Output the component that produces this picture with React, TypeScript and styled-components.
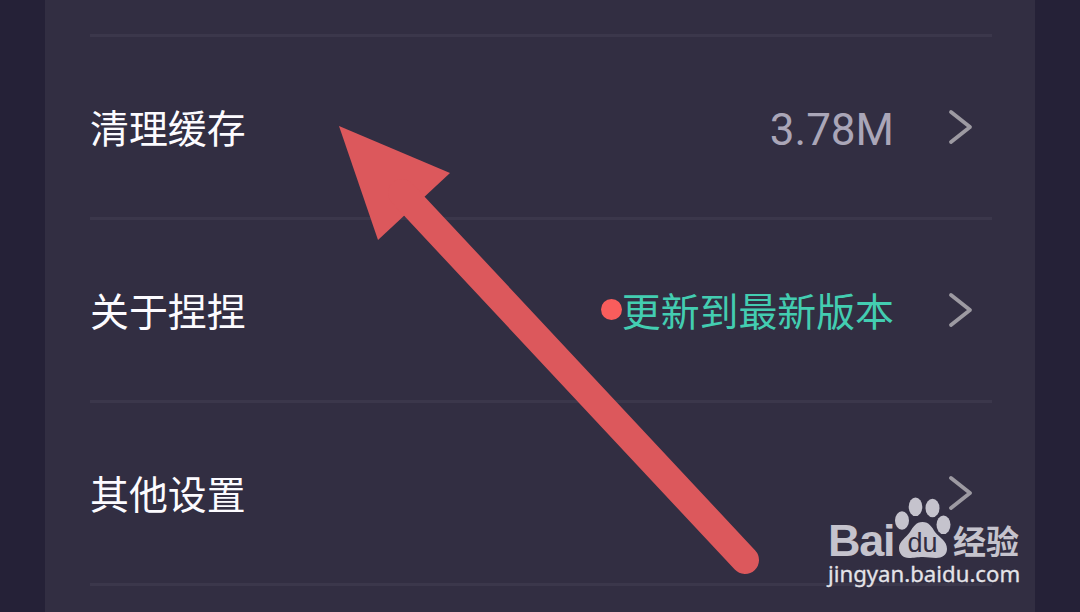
import React from 'react';
import styled, { createGlobalStyle } from 'styled-components';

const GlobalStyle = createGlobalStyle`
  * {
    box-sizing: border-box;
  }

  body {
    margin: 0;
    overflow: hidden;
    background: #252137;
    font-family: 'Noto Sans CJK SC', sans-serif;
  }
`;

const Page = styled.div`
  position: relative;
  height: 612px;
  padding: 0 45px;
  overflow: hidden;
  background: #252137;
`;

const SettingsPanel = styled.main`
  height: 612px;
  padding: 0 43px 0 45px;
  overflow: hidden;
  background: #322e42;
`;

const SettingsRow = styled.div<{ $height?: number }>`
  display: flex;
  align-items: center;
  height: ${({ $height }) => $height ?? 183}px;
  padding-right: 19px;
  border-bottom: 3px solid #3b374b;
`;

const RowLabel = styled.span`
  flex: 1;
  padding-bottom: 2px;
  color: #fcfbff;
  font-size: 38.9px;
  line-height: 56px;
`;

const CacheSize = styled.span`
  margin-right: 53px;
  padding-top: 5px;
  color: #aaa6b8;
  font-family: Roboto, sans-serif;
  font-size: 44px;
  line-height: 56px;
`;

const UpdateNotice = styled.span`
  display: flex;
  align-items: center;
  margin-right: 53px;
  padding-bottom: 2px;
  color: #43cdb1;
  font-size: 38.9px;
  line-height: 56px;
`;

const RedDot = styled.span`
  width: 21px;
  height: 21px;
  border-radius: 50%;
  background: #f95d5c;
`;

const ChevronIcon = styled.svg`
  display: block;
  width: 26px;
  height: 38px;
`;

const PointerArrow = styled.svg`
  position: absolute;
  top: 0;
  left: 0;
`;

const Watermark = styled.div`
  position: absolute;
  top: 494px;
  left: 828px;
  width: 196px;
  color: #c5c3cd;
`;

const BrandLine = styled.div`
  display: flex;
  align-items: flex-end;
  height: 66px;
`;

const BrandText = styled.span`
  width: 67px;
  font-family: 'Liberation Sans', sans-serif;
  font-size: 45px;
  font-weight: 700;
  line-height: 38px;
  letter-spacing: -1.2px;
`;

const PawIcon = styled.svg`
  display: block;
  flex: none;
  width: 58px;
  height: 66px;
`;

const BrandSuffix = styled.span`
  font-size: 33px;
  font-weight: 700;
  line-height: 38px;
  white-space: nowrap;
  transform: translateY(-1px);
`;

const SiteAddress = styled.div`
  color: #e4e3e8;
  font-family: 'Noto Sans', sans-serif;
  font-size: 22.2px;
  line-height: 28px;
  white-space: nowrap;
  -webkit-text-stroke: 0.3px #e4e3e8;
`;

const Chevron: React.FC = () => (
  <ChevronIcon viewBox="0 0 26 38" fill="none">
    <path
      d="M4 4L23 19L4 34"
      stroke="#9d9aa2"
      strokeWidth="3.8"
      strokeLinecap="round"
      strokeLinejoin="round"
    />
  </ChevronIcon>
);

const Paw: React.FC = () => (
  <PawIcon viewBox="0 0 58 66" fill="#c5c3cd">
    <ellipse cx="7" cy="26.5" rx="7" ry="9.3" />
    <ellipse cx="20.5" cy="12.8" rx="6.8" ry="9.3" />
    <ellipse cx="37.5" cy="14" rx="7" ry="9.3" />
    <ellipse cx="48.5" cy="30.8" rx="7" ry="9.3" />
    <path d="M27.5 28C34 28 37 33 40 38C45 44 52 47 52 55C52 61 47 64 41 64C36 64 33 63 28 63C22 63 19 64 14 64C8 64 4 60 4 54C4 47 11 44 15 38C18 33 21 28 27.5 28Z" />
    <text
      x="27.5"
      y="58"
      fill="#322e42"
      fontFamily="Liberation Sans, sans-serif"
      fontSize="27"
      textAnchor="middle"
    >
      du
    </text>
  </PawIcon>
);

const App: React.FC = () => {
  return (
    <>
      <GlobalStyle />
      <Page>
        <SettingsPanel>
          <SettingsRow $height={37} />
          <SettingsRow>
            <RowLabel>清理缓存</RowLabel>
            <CacheSize>3.78M</CacheSize>
            <Chevron />
          </SettingsRow>
          <SettingsRow>
            <RowLabel>关于捏捏</RowLabel>
            <UpdateNotice>
              <RedDot />
              更新到最新版本
            </UpdateNotice>
            <Chevron />
          </SettingsRow>
          <SettingsRow>
            <RowLabel>其他设置</RowLabel>
            <Chevron />
          </SettingsRow>
        </SettingsPanel>

        <PointerArrow width="1080" height="612" viewBox="0 0 1080 612">
          <path d="M339 126L450 173L378 240Z" fill="#dc585c" />
          <path
            d="M402 193L745 560"
            stroke="#dc585c"
            strokeWidth="28"
            strokeLinecap="round"
          />
        </PointerArrow>

        <Watermark>
          <BrandLine>
            <BrandText>Bai</BrandText>
            <Paw />
            <BrandSuffix>经验</BrandSuffix>
          </BrandLine>
          <SiteAddress>jingyan.baidu.com</SiteAddress>
        </Watermark>
      </Page>
    </>
  );
};

export default App;
